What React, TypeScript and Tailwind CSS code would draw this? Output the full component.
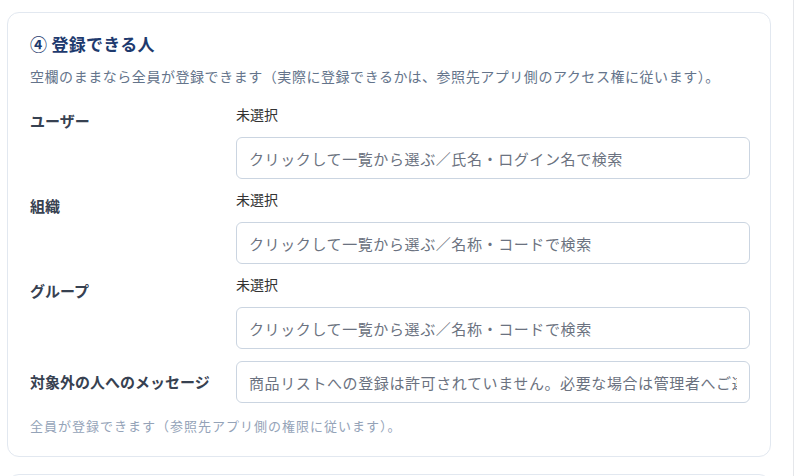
const jp = "font-['Noto_Sans_CJK_JP','Noto_Sans',sans-serif]"

type Field = {
  label: string
  placeholder: string
}

const pickers: Field[] = [
  { label: "ユーザー", placeholder: "クリックして一覧から選ぶ／氏名・ログイン名で検索" },
  { label: "組織", placeholder: "クリックして一覧から選ぶ／名称・コードで検索" },
  { label: "グループ", placeholder: "クリックして一覧から選ぶ／名称・コードで検索" },
]

function PickerRow({ field }: { field: Field }) {
  return (
    <div className="grid grid-cols-[192px_1fr] gap-x-[14px]">
      <div className="pt-[5px] text-[15px] font-bold leading-5 text-[#374151]">{field.label}</div>
      <div>
        <div className="-mt-[2px] text-[14px] leading-5 text-[#333333]">未選択</div>
        <input
          type="text"
          placeholder={field.placeholder}
          className="mt-[13px] h-[42px] w-full rounded-md border border-[#cbd5e1] bg-white px-3 text-[15px] tracking-[0.6px] text-[#333] outline-none placeholder:text-[#6b7280]"
        />
      </div>
    </div>
  )
}

export default function App() {
  return (
    <div className={`${jp} h-[476px] w-[794px] overflow-hidden border-r border-[#e5e7eb] bg-white`}>
      <section className="ml-[7px] mt-3 w-[764px] rounded-xl border border-[#e2e8f0] bg-white pb-5 pl-[22px] pr-5 pt-[19px]">
        <h2 className="text-[17px] font-bold leading-6 tracking-[0.3px] text-[#1e3a6e]">④ 登録できる人</h2>
        <p className="mt-[10px] text-[14px] leading-5 tracking-[0.55px] text-[#64748b]">
          空欄のままなら全員が登録できます（実際に登録できるかは、参照先アプリ側のアクセス権に従います）。
        </p>

        <div className="mt-5 flex flex-col gap-[12px]">
          {pickers.map((f) => (
            <PickerRow key={f.label} field={f} />
          ))}

          <div className="grid grid-cols-[192px_1fr] items-center gap-x-[14px]">
            <div className="text-[15px] font-bold leading-5 text-[#374151]">対象外の人へのメッセージ</div>
            <input
              type="text"
              placeholder="商品リストへの登録は許可されていません。必要な場合は管理者へご連絡ください。"
              className="h-[42px] w-full rounded-md border border-[#cbd5e1] bg-white px-3 text-[15px] tracking-[0.6px] text-[#333] outline-none placeholder:text-[#6b7280]"
            />
          </div>
        </div>

        <p className="mt-[13px] text-[13px] leading-5 tracking-[1px] text-[#94a3b8]">
          全員が登録できます（参照先アプリ側の権限に従います）。
        </p>
      </section>

      <section className="ml-[7px] mt-[17px] h-10 w-[764px] rounded-xl border border-[#e2e8f0] bg-white" />
    </div>
  )
}
